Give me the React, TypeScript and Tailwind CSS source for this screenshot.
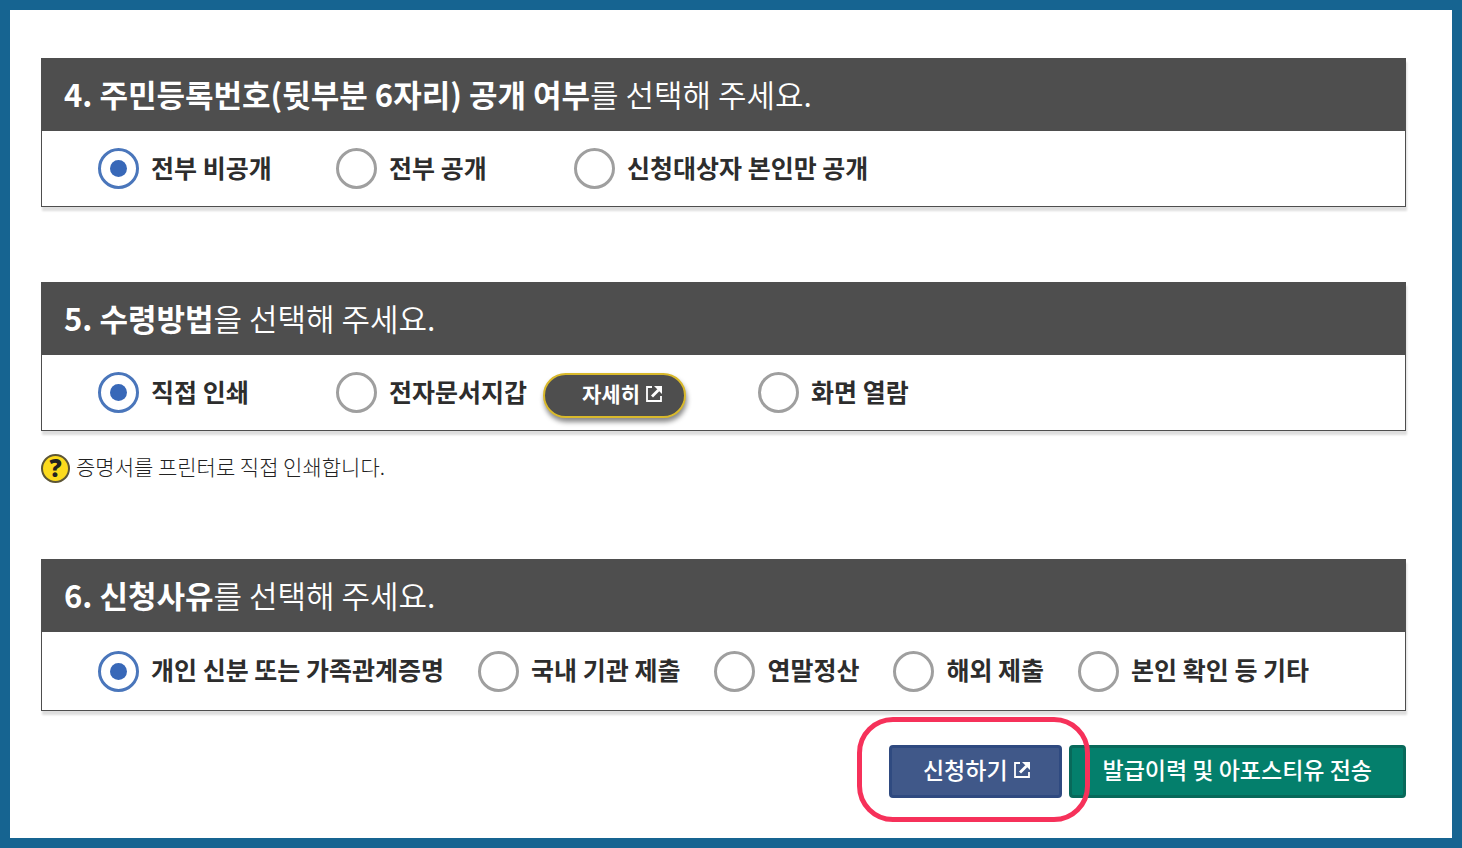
import type { ReactNode } from "react";

const receiveHelp = "증명서를 프린터로 직접 인쇄합니다.";

function PopupIcon({ className }: { className?: string }) {
  return (
    <svg viewBox="0 0 16 16" className={className} fill="none" aria-hidden="true">
      <path d="M6 1H1v14h14v-5" stroke="currentColor" strokeWidth="1.8" />
      <path d="M6 10.5 12.5 4" stroke="currentColor" strokeWidth="2.8" />
      <path d="M8 0h8v8z" fill="currentColor" />
    </svg>
  );
}

function HelpIcon() {
  return (
    <span
      aria-hidden="true"
      className="flex size-[29px] shrink-0 items-center justify-center rounded-full border-2 border-[#5d5636] bg-[#fddb1d] font-['Open_Sans',sans-serif] text-2xl leading-none font-extrabold text-[#222]"
    >
      ?
    </span>
  );
}

function RadioOption({ name, label, defaultChecked, wide }: { name: string; label: string; defaultChecked?: boolean; wide?: boolean }) {
  return (
    <label className={wide ? "flex min-w-[204px] cursor-pointer items-center gap-3" : "flex cursor-pointer items-center gap-3"}>
      <input
        type="radio"
        name={name}
        defaultChecked={defaultChecked}
        className="grid size-[41px] shrink-0 cursor-pointer appearance-none place-content-center rounded-full border-3 border-[#9f9f9f] bg-white before:size-[17px] before:rounded-full checked:border-[#4a76bb] checked:before:bg-[#3868b8]"
      />
      <span className="pb-1 text-[25px] leading-9 font-bold whitespace-nowrap text-[#2d2d2d]">{label}</span>
    </label>
  );
}

function Question({ id, number, subject, rest, children }: { id: string; number: number; subject: string; rest: string; children: ReactNode }) {
  return (
    <section className="border border-[#4e4e4e] bg-white shadow-[1px_4px_2px_#dedede]">
      <h2 id={id} className="bg-[#4e4e4e] px-[22px] pt-[11px] pb-[13px] text-[31px] leading-12 font-[350] text-white">
        <strong className="font-bold">
          {number}. {subject}
        </strong>
        {rest}
      </h2>
      {children}
    </section>
  );
}

export default function App() {
  return (
    <main className="min-h-screen border-10 border-[#166491] bg-white pt-12 pr-[46px] pb-10 pl-[31px] font-['Noto_Sans_CJK_KR',sans-serif]">
      <form onSubmit={(e) => e.preventDefault()}>
        <Question id="disclosure" number={4} subject="주민등록번호(뒷부분 6자리) 공개 여부" rest="를 선택해 주세요.">
          <div role="radiogroup" aria-labelledby="disclosure" className="flex min-h-[75px] flex-wrap items-center gap-x-[34px] pr-6 pl-14">
            <RadioOption name="disclosure" label="전부 비공개" defaultChecked wide />
            <RadioOption name="disclosure" label="전부 공개" wide />
            <RadioOption name="disclosure" label="신청대상자 본인만 공개" wide />
          </div>
        </Question>

        <div className="mt-[75px]">
          <Question id="receive" number={5} subject="수령방법" rest="을 선택해 주세요.">
            <div role="radiogroup" aria-labelledby="receive" className="flex min-h-[75px] flex-wrap items-center gap-x-[34px] pr-6 pl-14">
              <RadioOption name="receive" label="직접 인쇄" defaultChecked wide />
              <div className="mr-[38px] flex items-center gap-4">
                <RadioOption name="receive" label="전자문서지갑" />
                <button
                  type="button"
                  className="mt-1.5 flex h-[45px] cursor-pointer items-center gap-1.5 rounded-full border-2 border-[#d9b92b] bg-[#4e4e4e] pr-[22px] pb-1 pl-[37px] text-[21px] font-bold text-white shadow-[1px_4px_5px_#888]"
                >
                  자세히
                  <PopupIcon className="size-4" />
                </button>
              </div>
              <RadioOption name="receive" label="화면 열람" />
            </div>
          </Question>
        </div>
        <p className="mt-[19px] flex items-center gap-1.5 text-[21px] leading-8 font-light text-[#222]">
          <HelpIcon />
          <span className="pb-1">{receiveHelp}</span>
        </p>

        <div className="mt-[73px]">
          <Question id="reason" number={6} subject="신청사유" rest="를 선택해 주세요.">
            <div role="radiogroup" aria-labelledby="reason" className="flex min-h-[78px] flex-wrap items-center gap-x-[34px] pr-6 pl-14">
              <RadioOption name="reason" label="개인 신분 또는 가족관계증명" defaultChecked />
              <RadioOption name="reason" label="국내 기관 제출" />
              <RadioOption name="reason" label="연말정산" />
              <RadioOption name="reason" label="해외 제출" />
              <RadioOption name="reason" label="본인 확인 등 기타" />
            </div>
          </Question>
        </div>

        <div className="mt-[34px] flex justify-end gap-[7px]">
          <div className="relative">
            <button
              type="submit"
              className="flex h-[53px] cursor-pointer items-center gap-1.5 rounded-sm border-3 border-[#2f4a80] bg-[#405889] pr-[29px] pb-1 pl-[31px] text-[23px] font-medium text-white"
            >
              신청하기
              <PopupIcon className="size-4" />
            </button>
            <span className="pointer-events-none absolute -inset-x-7 -top-7 -bottom-6 z-10 -ml-1 rounded-[36px] border-5 border-[#f6315a]" />
          </div>
          <button
            type="button"
            className="h-[53px] cursor-pointer rounded-sm border-3 border-[#08695a] bg-[#047f6c] px-[31px] pb-1 text-[23px] font-medium text-white"
          >
            발급이력 및 아포스티유 전송
          </button>
        </div>
      </form>
    </main>
  );
}
